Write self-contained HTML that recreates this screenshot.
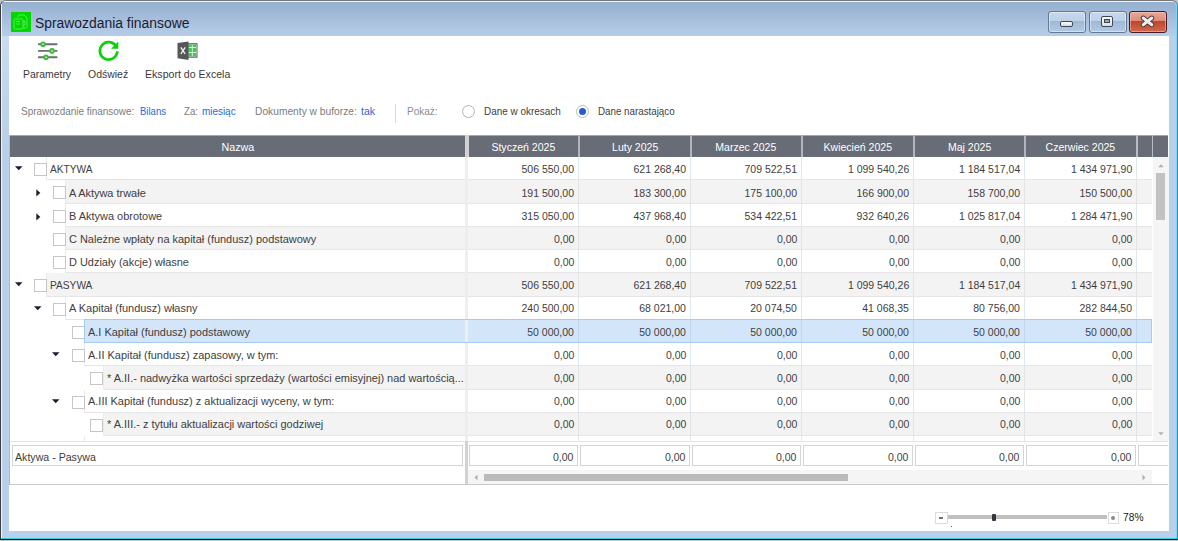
<!DOCTYPE html>
<html><head><meta charset="utf-8"><title>Sprawozdania finansowe</title>
<style>
*{box-sizing:border-box;margin:0;padding:0}
html,body{width:1178px;height:541px;overflow:hidden;background:#c4c4c4;font-family:"Liberation Sans",sans-serif}
.a{position:absolute}
.t{position:absolute;white-space:nowrap;line-height:1}
.cb{position:absolute;width:13px;height:13px;border:1px solid #c6c6c6;background:#fff}
</style></head><body>

<div class="a" style="left:0;top:0;width:1178px;height:540px;background:#b9d0ea;border-left:1px solid #3c3c3c;border-top:1px solid #787878;border-right:1px solid #2599b2;border-bottom:1px solid #0c1418;border-radius:6px 6px 0 0"></div>
<div class="a" style="left:1px;top:1px;width:1175px;height:35px;border-radius:5px 5px 0 0;background:linear-gradient(#eef4fa 0px,#eef4fa 1px,#95b0d0 1px,#9cb5d3 8px,#b6cde8 34px)"></div>
<div class="a" style="left:1176px;top:5px;width:1px;height:533px;background:#86d2ee"></div>
<div class="a" style="left:1px;top:538px;width:1176px;height:1px;background:#30cde6"></div>
<div class="a" style="left:1px;top:4px;width:1px;height:534px;background:#f2f6fa"></div>
<div class="a" style="left:2px;top:36px;width:7px;height:110px;background:linear-gradient(#c9dcf0,#b9d0ea)"></div>
<div class="a" style="left:11px;top:12px;width:20px;height:20px;background:#00d800"></div>
<svg class="a" style="left:11px;top:12px" width="20" height="20" viewBox="0 0 20 20"><g fill="none" stroke="#66ea66" stroke-width="0.9"><path d="M7 5.5 V4.5 Q7 3 8.5 3 H13 L16 6 V14.5 Q16 16 14.5 16 H12"/><rect x="3" y="7" width="9" height="10" rx="1.5"/><path d="M5 9.5 H9 M5 12 H9"/><path d="M12 9 H14 V13 H12"/></g></svg>
<div class="t" style="left:34.60px;top:16px;font-size:14px;color:#1b1b35;transform:scaleX(0.9919);transform-origin:0 0">Sprawozdania finansowe</div>
<div class="a" style="left:1048px;top:11px;width:38px;height:22px;border:1px solid #66788f;border-radius:3px;background:linear-gradient(#c6d8ec 0,#bcd1e9 45%,#9eb8d4 46%,#b2cae4 100%);box-shadow:inset 0 0 0 1px rgba(255,255,255,.45)"></div>
<div class="a" style="left:1060px;top:21px;width:13px;height:6px;border:1px solid #3e4858;border-radius:2px;background:linear-gradient(#fff,#d8d8d8)"></div>
<div class="a" style="left:1089px;top:11px;width:38px;height:22px;border:1px solid #66788f;border-radius:3px;background:linear-gradient(#c6d8ec 0,#bcd1e9 45%,#9eb8d4 46%,#b2cae4 100%);box-shadow:inset 0 0 0 1px rgba(255,255,255,.45)"></div>
<div class="a" style="left:1101px;top:16px;width:12px;height:11px;border:1px solid #3e4858;border-radius:2px;background:linear-gradient(#fff,#dcdcdc)"></div>
<div class="a" style="left:1104px;top:19px;width:6px;height:4px;border:1px solid #3e4858;background:#8aa6c8"></div>
<div class="a" style="left:1129px;top:11px;width:38px;height:22px;border:1px solid #4a1a22;border-radius:3px;background:linear-gradient(#e9a898 0,#dc8a78 45%,#c0442a 46%,#d06a50 100%);box-shadow:inset 0 0 0 1px rgba(255,220,210,.45)"></div>
<svg class="a" style="left:1140px;top:15px" width="15" height="13" viewBox="0 0 15 13"><path d="M3.2 3 L11.8 9.8 M11.8 3 L3.2 9.8" stroke="#4a3434" stroke-width="4.8" fill="none" stroke-linecap="round"/><path d="M3.2 3 L11.8 9.8 M11.8 3 L3.2 9.8" stroke="#ececec" stroke-width="3.0" fill="none" stroke-linecap="round"/></svg>
<div class="a" style="left:9px;top:36px;width:1160px;height:495px;background:#fff"></div>
<svg class="a" style="left:36px;top:39px" width="24" height="22" viewBox="0 0 24 22">
<g stroke="#6c6c72" stroke-width="1.9" stroke-linecap="round"><line x1="2.8" y1="5.2" x2="20.6" y2="5.2"/><line x1="2.8" y1="11.9" x2="20.6" y2="11.9"/><line x1="2.8" y1="18.3" x2="20.6" y2="18.3"/></g>
<g fill="#3cbc3c"><circle cx="7.1" cy="5.2" r="2.8"/><circle cx="16" cy="11.9" r="2.8"/><circle cx="10" cy="18.3" r="2.8"/></g>
<g fill="#c8f0c8"><circle cx="7.1" cy="5.2" r="0.9"/><circle cx="16" cy="11.9" r="0.9"/><circle cx="10" cy="18.3" r="0.9"/></g></svg>
<svg class="a" style="left:96px;top:39px" width="26" height="24" viewBox="0 0 26 24">
<path d="M20.2 7.6 A8.7 8.7 0 1 0 21.3 12.3" fill="none" stroke="#0ad20a" stroke-width="2.7"/>
<path d="M22.3 2.5 L22.3 9.8 L15 9.8 Z" fill="#0ad20a"/></svg>
<svg class="a" style="left:176px;top:40px" width="24" height="22" viewBox="0 0 24 22">
<rect x="12" y="3.2" width="9.5" height="14.5" fill="#5a5c60"/>
<rect x="12.5" y="4.5" width="8" height="12" fill="#fff"/>
<g fill="#3ccc4a"><rect x="12.5" y="4.6" width="3.4" height="2.4"/><rect x="16.6" y="4.6" width="3.6" height="2.4"/><rect x="12.5" y="7.8" width="3.4" height="4.2"/><rect x="16.6" y="7.8" width="3.6" height="4.2"/><rect x="12.5" y="12.9" width="3.4" height="3.4"/><rect x="16.6" y="12.9" width="3.6" height="3.4"/></g>
<path d="M1.5 3 L12.5 1.5 L12.5 20 L1.5 18.3 Z" fill="#55575b"/>
<path d="M4.8 7.3 L9.2 14 M9.2 7.3 L4.8 14" stroke="#f4f4f4" stroke-width="1.35"/></svg>
<div class="t" style="left:22.90px;top:69px;font-size:11px;color:#3a3a3a;transform:scaleX(0.9478);transform-origin:0 0">Parametry</div>
<div class="t" style="left:88.30px;top:69px;font-size:11px;color:#3a3a3a;transform:scaleX(0.9529);transform-origin:0 0">Odświeź</div>
<div class="t" style="left:144.70px;top:69px;font-size:11px;color:#3a3a3a;transform:scaleX(0.9621);transform-origin:0 0">Eksport do Excela</div>
<div class="t" style="left:21.10px;top:106px;font-size:11px;color:#7c7c7c;transform:scaleX(0.9030);transform-origin:0 0">Sprawozdanie finansowe:</div>
<div class="t" style="left:139.60px;top:106px;font-size:11px;color:#2a68d6;transform:scaleX(0.8676);transform-origin:0 0">Bilans</div>
<div class="t" style="left:183.70px;top:106px;font-size:11px;color:#7c7c7c;transform:scaleX(0.8802);transform-origin:0 0">Za:</div>
<div class="t" style="left:202.40px;top:106px;font-size:11px;color:#2a68d6;transform:scaleX(0.9009);transform-origin:0 0">miesiąc</div>
<div class="t" style="left:254.70px;top:106px;font-size:11px;color:#7c7c7c;transform:scaleX(0.9302);transform-origin:0 0">Dokumenty w buforze:</div>
<div class="t" style="left:361.00px;top:106px;font-size:11px;color:#2a68d6;transform:scaleX(0.9532);transform-origin:0 0">tak</div>
<div class="t" style="left:407.20px;top:106px;font-size:11px;color:#8c8c8c;transform:scaleX(0.9096);transform-origin:0 0">Pokaż:</div>
<div class="t" style="left:484.20px;top:106px;font-size:11px;color:#3e3e3e;transform:scaleX(0.9035);transform-origin:0 0">Dane w okresach</div>
<div class="t" style="left:598.40px;top:106px;font-size:11px;color:#3e3e3e;transform:scaleX(0.8883);transform-origin:0 0">Dane narastająco</div>
<div class="a" style="left:395px;top:104px;width:1px;height:19px;background:#e6d2ca"></div>
<div class="a" style="left:462px;top:104.5px;width:13px;height:13px;border-radius:50%;border:1px solid #b4b4b4;background:#fff"></div>
<div class="a" style="left:575.5px;top:104.5px;width:13px;height:13px;border-radius:50%;border:1px solid #bcbcbc;background:#fff"></div>
<div class="a" style="left:578.5px;top:107.5px;width:7px;height:7px;border-radius:50%;background:#2a5cd0"></div>
<div class="a" style="left:10px;top:135px;width:1158px;height:22px;background:#676c77"></div>
<div class="a" style="left:10px;top:135px;width:1158px;height:1px;background:#a4a7ae"></div>
<div class="a" style="left:465px;top:135px;width:4px;height:22px;background:#d2d2d4"></div>
<div class="a" style="left:578px;top:135px;width:2px;height:22px;background:#b2b5bc"></div>
<div class="a" style="left:690px;top:135px;width:2px;height:22px;background:#b2b5bc"></div>
<div class="a" style="left:801px;top:135px;width:2px;height:22px;background:#b2b5bc"></div>
<div class="a" style="left:913px;top:135px;width:2px;height:22px;background:#b2b5bc"></div>
<div class="a" style="left:1024px;top:135px;width:2px;height:22px;background:#b2b5bc"></div>
<div class="a" style="left:1136px;top:135px;width:1.5px;height:22px;background:#b8bbc2"></div>
<div class="a" style="left:1151.5px;top:135px;width:1.5px;height:22px;background:#b8bbc2"></div>
<div class="t" style="left:220.59px;top:142px;font-size:11px;color:#fff;transform:scaleX(0.9725);transform-origin:50% 0">Nazwa</div>
<div class="t" style="left:489.87px;top:142px;font-size:11px;color:#fff;transform:scaleX(0.9580);transform-origin:50% 0">Styczeń 2025</div>
<div class="t" style="left:610.54px;top:142px;font-size:11px;color:#fff;transform:scaleX(0.9580);transform-origin:50% 0">Luty 2025</div>
<div class="t" style="left:714.40px;top:142px;font-size:11px;color:#fff;transform:scaleX(0.9580);transform-origin:50% 0">Marzec 2025</div>
<div class="t" style="left:821.92px;top:142px;font-size:11px;color:#fff;transform:scaleX(0.9580);transform-origin:50% 0">Kwiecień 2025</div>
<div class="t" style="left:946.57px;top:142px;font-size:11px;color:#fff;transform:scaleX(0.9580);transform-origin:50% 0">Maj 2025</div>
<div class="t" style="left:1044.32px;top:142px;font-size:11px;color:#fff;transform:scaleX(0.9580);transform-origin:50% 0">Czerwiec 2025</div>
<div class="a" style="left:46px;top:157px;width:1106px;height:22px;background:#ffffff"></div>
<div class="a" style="left:46px;top:179px;width:1106px;height:1px;background:#e6e6e6"></div>
<div class="a" style="left:46px;top:157px;width:1px;height:23px;background:#ebebeb"></div>
<div class="a" style="left:465px;top:157px;width:3px;height:23px;background:#eeeeee"></div>
<div class="a" style="left:578px;top:157px;width:1px;height:22px;background:#dfe7f0"></div>
<div class="a" style="left:690px;top:157px;width:1px;height:22px;background:#dfe7f0"></div>
<div class="a" style="left:801px;top:157px;width:1px;height:22px;background:#dfe7f0"></div>
<div class="a" style="left:913px;top:157px;width:1px;height:22px;background:#dfe7f0"></div>
<div class="a" style="left:1024px;top:157px;width:1px;height:22px;background:#dfe7f0"></div>
<div class="a" style="left:1136px;top:157px;width:1px;height:22px;background:#dfe7f0"></div>
<svg class="a" style="left:15px;top:166px" width="8" height="5" viewBox="0 0 8 5"><path d="M0 0.3 H7.5 L3.75 4.3 Z" fill="#1c1c30"/></svg>
<div class="cb" style="left:34px;top:163px"></div>
<div class="t" style="left:50.10px;top:164px;font-size:11px;color:#3e3e3e;transform:scaleX(0.9250);transform-origin:0 0">AKTYWA</div>
<div class="t" style="left:519.34px;top:164px;font-size:11px;color:#3e3e3e;transform:scaleX(0.9550);transform-origin:100% 0">506 550,00</div>
<div class="t" style="left:631.34px;top:164px;font-size:11px;color:#3e3e3e;transform:scaleX(0.9550);transform-origin:100% 0">621 268,40</div>
<div class="t" style="left:742.34px;top:164px;font-size:11px;color:#3e3e3e;transform:scaleX(0.9550);transform-origin:100% 0">709 522,51</div>
<div class="t" style="left:845.17px;top:164px;font-size:11px;color:#3e3e3e;transform:scaleX(0.9550);transform-origin:100% 0">1 099 540,26</div>
<div class="t" style="left:956.17px;top:164px;font-size:11px;color:#3e3e3e;transform:scaleX(0.9550);transform-origin:100% 0">1 184 517,04</div>
<div class="t" style="left:1068.17px;top:164px;font-size:11px;color:#3e3e3e;transform:scaleX(0.9550);transform-origin:100% 0">1 434 971,90</div>
<div class="a" style="left:65px;top:180px;width:1087px;height:23px;background:#f3f3f3"></div>
<div class="a" style="left:65px;top:203px;width:1087px;height:1px;background:#e6e6e6"></div>
<div class="a" style="left:65px;top:180px;width:1px;height:24px;background:#ebebeb"></div>
<div class="a" style="left:465px;top:180px;width:3px;height:24px;background:#eeeeee"></div>
<div class="a" style="left:578px;top:180px;width:1px;height:23px;background:#e4e4e4"></div>
<div class="a" style="left:690px;top:180px;width:1px;height:23px;background:#e4e4e4"></div>
<div class="a" style="left:801px;top:180px;width:1px;height:23px;background:#e4e4e4"></div>
<div class="a" style="left:913px;top:180px;width:1px;height:23px;background:#e4e4e4"></div>
<div class="a" style="left:1024px;top:180px;width:1px;height:23px;background:#e4e4e4"></div>
<div class="a" style="left:1136px;top:180px;width:1px;height:23px;background:#e4e4e4"></div>
<svg class="a" style="left:36px;top:189px" width="5" height="8" viewBox="0 0 5 8"><path d="M0.3 0.3 V7.5 L4.3 3.9 Z" fill="#1c1c30"/></svg>
<div class="cb" style="left:53px;top:186px"></div>
<div class="t" style="left:69.10px;top:188px;font-size:11px;color:#3e3e3e;transform:scaleX(0.9960);transform-origin:0 0">A Aktywa trwałe</div>
<div class="t" style="left:519.34px;top:188px;font-size:11px;color:#3e3e3e;transform:scaleX(0.9550);transform-origin:100% 0">191 500,00</div>
<div class="t" style="left:631.34px;top:188px;font-size:11px;color:#3e3e3e;transform:scaleX(0.9550);transform-origin:100% 0">183 300,00</div>
<div class="t" style="left:742.34px;top:188px;font-size:11px;color:#3e3e3e;transform:scaleX(0.9550);transform-origin:100% 0">175 100,00</div>
<div class="t" style="left:854.34px;top:188px;font-size:11px;color:#3e3e3e;transform:scaleX(0.9550);transform-origin:100% 0">166 900,00</div>
<div class="t" style="left:965.34px;top:188px;font-size:11px;color:#3e3e3e;transform:scaleX(0.9550);transform-origin:100% 0">158 700,00</div>
<div class="t" style="left:1077.34px;top:188px;font-size:11px;color:#3e3e3e;transform:scaleX(0.9550);transform-origin:100% 0">150 500,00</div>
<div class="a" style="left:65px;top:204px;width:1087px;height:22px;background:#ffffff"></div>
<div class="a" style="left:65px;top:226px;width:1087px;height:1px;background:#e6e6e6"></div>
<div class="a" style="left:65px;top:204px;width:1px;height:23px;background:#ebebeb"></div>
<div class="a" style="left:465px;top:204px;width:3px;height:23px;background:#eeeeee"></div>
<div class="a" style="left:578px;top:204px;width:1px;height:22px;background:#dfe7f0"></div>
<div class="a" style="left:690px;top:204px;width:1px;height:22px;background:#dfe7f0"></div>
<div class="a" style="left:801px;top:204px;width:1px;height:22px;background:#dfe7f0"></div>
<div class="a" style="left:913px;top:204px;width:1px;height:22px;background:#dfe7f0"></div>
<div class="a" style="left:1024px;top:204px;width:1px;height:22px;background:#dfe7f0"></div>
<div class="a" style="left:1136px;top:204px;width:1px;height:22px;background:#dfe7f0"></div>
<svg class="a" style="left:36px;top:213px" width="5" height="8" viewBox="0 0 5 8"><path d="M0.3 0.3 V7.5 L4.3 3.9 Z" fill="#1c1c30"/></svg>
<div class="cb" style="left:53px;top:210px"></div>
<div class="t" style="left:69.10px;top:211px;font-size:11px;color:#3e3e3e;transform:scaleX(0.9960);transform-origin:0 0">B Aktywa obrotowe</div>
<div class="t" style="left:519.34px;top:211px;font-size:11px;color:#3e3e3e;transform:scaleX(0.9550);transform-origin:100% 0">315 050,00</div>
<div class="t" style="left:631.34px;top:211px;font-size:11px;color:#3e3e3e;transform:scaleX(0.9550);transform-origin:100% 0">437 968,40</div>
<div class="t" style="left:742.34px;top:211px;font-size:11px;color:#3e3e3e;transform:scaleX(0.9550);transform-origin:100% 0">534 422,51</div>
<div class="t" style="left:854.34px;top:211px;font-size:11px;color:#3e3e3e;transform:scaleX(0.9550);transform-origin:100% 0">932 640,26</div>
<div class="t" style="left:956.17px;top:211px;font-size:11px;color:#3e3e3e;transform:scaleX(0.9550);transform-origin:100% 0">1 025 817,04</div>
<div class="t" style="left:1068.17px;top:211px;font-size:11px;color:#3e3e3e;transform:scaleX(0.9550);transform-origin:100% 0">1 284 471,90</div>
<div class="a" style="left:65px;top:227px;width:1087px;height:22px;background:#f3f3f3"></div>
<div class="a" style="left:65px;top:249px;width:1087px;height:1px;background:#e6e6e6"></div>
<div class="a" style="left:65px;top:227px;width:1px;height:23px;background:#ebebeb"></div>
<div class="a" style="left:465px;top:227px;width:3px;height:23px;background:#eeeeee"></div>
<div class="a" style="left:578px;top:227px;width:1px;height:22px;background:#e4e4e4"></div>
<div class="a" style="left:690px;top:227px;width:1px;height:22px;background:#e4e4e4"></div>
<div class="a" style="left:801px;top:227px;width:1px;height:22px;background:#e4e4e4"></div>
<div class="a" style="left:913px;top:227px;width:1px;height:22px;background:#e4e4e4"></div>
<div class="a" style="left:1024px;top:227px;width:1px;height:22px;background:#e4e4e4"></div>
<div class="a" style="left:1136px;top:227px;width:1px;height:22px;background:#e4e4e4"></div>
<div class="cb" style="left:53px;top:233px"></div>
<div class="t" style="left:69.10px;top:234px;font-size:11px;color:#3e3e3e;transform:scaleX(0.9960);transform-origin:0 0">C Należne wpłaty na kapitał (fundusz) podstawowy</div>
<div class="t" style="left:552.98px;top:234px;font-size:11px;color:#3e3e3e;transform:scaleX(0.9550);transform-origin:100% 0">0,00</div>
<div class="t" style="left:664.98px;top:234px;font-size:11px;color:#3e3e3e;transform:scaleX(0.9550);transform-origin:100% 0">0,00</div>
<div class="t" style="left:775.98px;top:234px;font-size:11px;color:#3e3e3e;transform:scaleX(0.9550);transform-origin:100% 0">0,00</div>
<div class="t" style="left:887.98px;top:234px;font-size:11px;color:#3e3e3e;transform:scaleX(0.9550);transform-origin:100% 0">0,00</div>
<div class="t" style="left:998.98px;top:234px;font-size:11px;color:#3e3e3e;transform:scaleX(0.9550);transform-origin:100% 0">0,00</div>
<div class="t" style="left:1110.98px;top:234px;font-size:11px;color:#3e3e3e;transform:scaleX(0.9550);transform-origin:100% 0">0,00</div>
<div class="a" style="left:65px;top:250px;width:1087px;height:22px;background:#ffffff"></div>
<div class="a" style="left:65px;top:272px;width:1087px;height:1px;background:#e6e6e6"></div>
<div class="a" style="left:65px;top:250px;width:1px;height:23px;background:#ebebeb"></div>
<div class="a" style="left:465px;top:250px;width:3px;height:23px;background:#eeeeee"></div>
<div class="a" style="left:578px;top:250px;width:1px;height:22px;background:#dfe7f0"></div>
<div class="a" style="left:690px;top:250px;width:1px;height:22px;background:#dfe7f0"></div>
<div class="a" style="left:801px;top:250px;width:1px;height:22px;background:#dfe7f0"></div>
<div class="a" style="left:913px;top:250px;width:1px;height:22px;background:#dfe7f0"></div>
<div class="a" style="left:1024px;top:250px;width:1px;height:22px;background:#dfe7f0"></div>
<div class="a" style="left:1136px;top:250px;width:1px;height:22px;background:#dfe7f0"></div>
<div class="cb" style="left:53px;top:256px"></div>
<div class="t" style="left:69.10px;top:257px;font-size:11px;color:#3e3e3e;transform:scaleX(0.9960);transform-origin:0 0">D Udziały (akcje) własne</div>
<div class="t" style="left:552.98px;top:257px;font-size:11px;color:#3e3e3e;transform:scaleX(0.9550);transform-origin:100% 0">0,00</div>
<div class="t" style="left:664.98px;top:257px;font-size:11px;color:#3e3e3e;transform:scaleX(0.9550);transform-origin:100% 0">0,00</div>
<div class="t" style="left:775.98px;top:257px;font-size:11px;color:#3e3e3e;transform:scaleX(0.9550);transform-origin:100% 0">0,00</div>
<div class="t" style="left:887.98px;top:257px;font-size:11px;color:#3e3e3e;transform:scaleX(0.9550);transform-origin:100% 0">0,00</div>
<div class="t" style="left:998.98px;top:257px;font-size:11px;color:#3e3e3e;transform:scaleX(0.9550);transform-origin:100% 0">0,00</div>
<div class="t" style="left:1110.98px;top:257px;font-size:11px;color:#3e3e3e;transform:scaleX(0.9550);transform-origin:100% 0">0,00</div>
<div class="a" style="left:46px;top:273px;width:1106px;height:23px;background:#f3f3f3"></div>
<div class="a" style="left:46px;top:296px;width:1106px;height:1px;background:#e6e6e6"></div>
<div class="a" style="left:46px;top:273px;width:1px;height:24px;background:#ebebeb"></div>
<div class="a" style="left:465px;top:273px;width:3px;height:24px;background:#eeeeee"></div>
<div class="a" style="left:578px;top:273px;width:1px;height:23px;background:#e4e4e4"></div>
<div class="a" style="left:690px;top:273px;width:1px;height:23px;background:#e4e4e4"></div>
<div class="a" style="left:801px;top:273px;width:1px;height:23px;background:#e4e4e4"></div>
<div class="a" style="left:913px;top:273px;width:1px;height:23px;background:#e4e4e4"></div>
<div class="a" style="left:1024px;top:273px;width:1px;height:23px;background:#e4e4e4"></div>
<div class="a" style="left:1136px;top:273px;width:1px;height:23px;background:#e4e4e4"></div>
<svg class="a" style="left:15px;top:282px" width="8" height="5" viewBox="0 0 8 5"><path d="M0 0.3 H7.5 L3.75 4.3 Z" fill="#1c1c30"/></svg>
<div class="cb" style="left:34px;top:279px"></div>
<div class="t" style="left:50.10px;top:280px;font-size:11px;color:#3e3e3e;transform:scaleX(0.9250);transform-origin:0 0">PASYWA</div>
<div class="t" style="left:519.34px;top:280px;font-size:11px;color:#3e3e3e;transform:scaleX(0.9550);transform-origin:100% 0">506 550,00</div>
<div class="t" style="left:631.34px;top:280px;font-size:11px;color:#3e3e3e;transform:scaleX(0.9550);transform-origin:100% 0">621 268,40</div>
<div class="t" style="left:742.34px;top:280px;font-size:11px;color:#3e3e3e;transform:scaleX(0.9550);transform-origin:100% 0">709 522,51</div>
<div class="t" style="left:845.17px;top:280px;font-size:11px;color:#3e3e3e;transform:scaleX(0.9550);transform-origin:100% 0">1 099 540,26</div>
<div class="t" style="left:956.17px;top:280px;font-size:11px;color:#3e3e3e;transform:scaleX(0.9550);transform-origin:100% 0">1 184 517,04</div>
<div class="t" style="left:1068.17px;top:280px;font-size:11px;color:#3e3e3e;transform:scaleX(0.9550);transform-origin:100% 0">1 434 971,90</div>
<div class="a" style="left:65px;top:297px;width:1087px;height:22px;background:#ffffff"></div>
<div class="a" style="left:65px;top:319px;width:1087px;height:1px;background:#e6e6e6"></div>
<div class="a" style="left:65px;top:297px;width:1px;height:23px;background:#ebebeb"></div>
<div class="a" style="left:465px;top:297px;width:3px;height:23px;background:#eeeeee"></div>
<div class="a" style="left:578px;top:297px;width:1px;height:22px;background:#dfe7f0"></div>
<div class="a" style="left:690px;top:297px;width:1px;height:22px;background:#dfe7f0"></div>
<div class="a" style="left:801px;top:297px;width:1px;height:22px;background:#dfe7f0"></div>
<div class="a" style="left:913px;top:297px;width:1px;height:22px;background:#dfe7f0"></div>
<div class="a" style="left:1024px;top:297px;width:1px;height:22px;background:#dfe7f0"></div>
<div class="a" style="left:1136px;top:297px;width:1px;height:22px;background:#dfe7f0"></div>
<svg class="a" style="left:34px;top:306px" width="8" height="5" viewBox="0 0 8 5"><path d="M0 0.3 H7.5 L3.75 4.3 Z" fill="#1c1c30"/></svg>
<div class="cb" style="left:53px;top:303px"></div>
<div class="t" style="left:69.10px;top:303px;font-size:11px;color:#3e3e3e;transform:scaleX(0.9960);transform-origin:0 0">A Kapitał (fundusz) własny</div>
<div class="t" style="left:519.34px;top:303px;font-size:11px;color:#3e3e3e;transform:scaleX(0.9550);transform-origin:100% 0">240 500,00</div>
<div class="t" style="left:637.46px;top:303px;font-size:11px;color:#3e3e3e;transform:scaleX(0.9550);transform-origin:100% 0">68 021,00</div>
<div class="t" style="left:748.46px;top:303px;font-size:11px;color:#3e3e3e;transform:scaleX(0.9550);transform-origin:100% 0">20 074,50</div>
<div class="t" style="left:860.46px;top:303px;font-size:11px;color:#3e3e3e;transform:scaleX(0.9550);transform-origin:100% 0">41 068,35</div>
<div class="t" style="left:971.46px;top:303px;font-size:11px;color:#3e3e3e;transform:scaleX(0.9550);transform-origin:100% 0">80 756,00</div>
<div class="t" style="left:1077.34px;top:303px;font-size:11px;color:#3e3e3e;transform:scaleX(0.9550);transform-origin:100% 0">282 844,50</div>
<div class="a" style="left:84px;top:320px;width:1068px;height:22px;background:#d3e5f9"></div>
<div class="a" style="left:84px;top:342px;width:1068px;height:1px;background:#e6e6e6"></div>
<div class="a" style="left:84px;top:320px;width:1px;height:23px;background:#ebebeb"></div>
<div class="a" style="left:465px;top:320px;width:3px;height:23px;background:#eeeeee"></div>
<div class="a" style="left:578px;top:320px;width:1px;height:22px;background:#c4d6ea"></div>
<div class="a" style="left:690px;top:320px;width:1px;height:22px;background:#c4d6ea"></div>
<div class="a" style="left:801px;top:320px;width:1px;height:22px;background:#c4d6ea"></div>
<div class="a" style="left:913px;top:320px;width:1px;height:22px;background:#c4d6ea"></div>
<div class="a" style="left:1024px;top:320px;width:1px;height:22px;background:#c4d6ea"></div>
<div class="a" style="left:1136px;top:320px;width:1px;height:22px;background:#c4d6ea"></div>
<div class="cb" style="left:72px;top:326px"></div>
<div class="t" style="left:88.10px;top:327px;font-size:11px;color:#3e3e3e;transform:scaleX(0.9960);transform-origin:0 0">A.I Kapitał (fundusz) podstawowy</div>
<div class="t" style="left:525.46px;top:327px;font-size:11px;color:#3e3e3e;transform:scaleX(0.9550);transform-origin:100% 0">50 000,00</div>
<div class="t" style="left:637.46px;top:327px;font-size:11px;color:#3e3e3e;transform:scaleX(0.9550);transform-origin:100% 0">50 000,00</div>
<div class="t" style="left:748.46px;top:327px;font-size:11px;color:#3e3e3e;transform:scaleX(0.9550);transform-origin:100% 0">50 000,00</div>
<div class="t" style="left:860.46px;top:327px;font-size:11px;color:#3e3e3e;transform:scaleX(0.9550);transform-origin:100% 0">50 000,00</div>
<div class="t" style="left:971.46px;top:327px;font-size:11px;color:#3e3e3e;transform:scaleX(0.9550);transform-origin:100% 0">50 000,00</div>
<div class="t" style="left:1083.46px;top:327px;font-size:11px;color:#3e3e3e;transform:scaleX(0.9550);transform-origin:100% 0">50 000,00</div>
<div class="a" style="left:84px;top:343px;width:1068px;height:22px;background:#ffffff"></div>
<div class="a" style="left:84px;top:365px;width:1068px;height:1px;background:#e6e6e6"></div>
<div class="a" style="left:84px;top:343px;width:1px;height:23px;background:#ebebeb"></div>
<div class="a" style="left:465px;top:343px;width:3px;height:23px;background:#eeeeee"></div>
<div class="a" style="left:578px;top:343px;width:1px;height:22px;background:#dfe7f0"></div>
<div class="a" style="left:690px;top:343px;width:1px;height:22px;background:#dfe7f0"></div>
<div class="a" style="left:801px;top:343px;width:1px;height:22px;background:#dfe7f0"></div>
<div class="a" style="left:913px;top:343px;width:1px;height:22px;background:#dfe7f0"></div>
<div class="a" style="left:1024px;top:343px;width:1px;height:22px;background:#dfe7f0"></div>
<div class="a" style="left:1136px;top:343px;width:1px;height:22px;background:#dfe7f0"></div>
<svg class="a" style="left:52px;top:352px" width="8" height="5" viewBox="0 0 8 5"><path d="M0 0.3 H7.5 L3.75 4.3 Z" fill="#1c1c30"/></svg>
<div class="cb" style="left:72px;top:349px"></div>
<div class="t" style="left:88.10px;top:350px;font-size:11px;color:#3e3e3e;transform:scaleX(0.9960);transform-origin:0 0">A.II Kapitał (fundusz) zapasowy, w tym:</div>
<div class="t" style="left:552.98px;top:350px;font-size:11px;color:#3e3e3e;transform:scaleX(0.9550);transform-origin:100% 0">0,00</div>
<div class="t" style="left:664.98px;top:350px;font-size:11px;color:#3e3e3e;transform:scaleX(0.9550);transform-origin:100% 0">0,00</div>
<div class="t" style="left:775.98px;top:350px;font-size:11px;color:#3e3e3e;transform:scaleX(0.9550);transform-origin:100% 0">0,00</div>
<div class="t" style="left:887.98px;top:350px;font-size:11px;color:#3e3e3e;transform:scaleX(0.9550);transform-origin:100% 0">0,00</div>
<div class="t" style="left:998.98px;top:350px;font-size:11px;color:#3e3e3e;transform:scaleX(0.9550);transform-origin:100% 0">0,00</div>
<div class="t" style="left:1110.98px;top:350px;font-size:11px;color:#3e3e3e;transform:scaleX(0.9550);transform-origin:100% 0">0,00</div>
<div class="a" style="left:103px;top:366px;width:1049px;height:23px;background:#f3f3f3"></div>
<div class="a" style="left:103px;top:389px;width:1049px;height:1px;background:#e6e6e6"></div>
<div class="a" style="left:103px;top:366px;width:1px;height:24px;background:#ebebeb"></div>
<div class="a" style="left:465px;top:366px;width:3px;height:24px;background:#eeeeee"></div>
<div class="a" style="left:578px;top:366px;width:1px;height:23px;background:#e4e4e4"></div>
<div class="a" style="left:690px;top:366px;width:1px;height:23px;background:#e4e4e4"></div>
<div class="a" style="left:801px;top:366px;width:1px;height:23px;background:#e4e4e4"></div>
<div class="a" style="left:913px;top:366px;width:1px;height:23px;background:#e4e4e4"></div>
<div class="a" style="left:1024px;top:366px;width:1px;height:23px;background:#e4e4e4"></div>
<div class="a" style="left:1136px;top:366px;width:1px;height:23px;background:#e4e4e4"></div>
<div class="cb" style="left:90px;top:372px"></div>
<div class="t" style="left:107.10px;top:373px;font-size:11px;color:#3e3e3e;transform:scaleX(0.9960);transform-origin:0 0">* A.II.- nadwyżka wartości sprzedaży (wartości emisyjnej) nad wartością...</div>
<div class="t" style="left:552.98px;top:373px;font-size:11px;color:#3e3e3e;transform:scaleX(0.9550);transform-origin:100% 0">0,00</div>
<div class="t" style="left:664.98px;top:373px;font-size:11px;color:#3e3e3e;transform:scaleX(0.9550);transform-origin:100% 0">0,00</div>
<div class="t" style="left:775.98px;top:373px;font-size:11px;color:#3e3e3e;transform:scaleX(0.9550);transform-origin:100% 0">0,00</div>
<div class="t" style="left:887.98px;top:373px;font-size:11px;color:#3e3e3e;transform:scaleX(0.9550);transform-origin:100% 0">0,00</div>
<div class="t" style="left:998.98px;top:373px;font-size:11px;color:#3e3e3e;transform:scaleX(0.9550);transform-origin:100% 0">0,00</div>
<div class="t" style="left:1110.98px;top:373px;font-size:11px;color:#3e3e3e;transform:scaleX(0.9550);transform-origin:100% 0">0,00</div>
<div class="a" style="left:84px;top:390px;width:1068px;height:22px;background:#ffffff"></div>
<div class="a" style="left:84px;top:412px;width:1068px;height:1px;background:#e6e6e6"></div>
<div class="a" style="left:84px;top:390px;width:1px;height:23px;background:#ebebeb"></div>
<div class="a" style="left:465px;top:390px;width:3px;height:23px;background:#eeeeee"></div>
<div class="a" style="left:578px;top:390px;width:1px;height:22px;background:#dfe7f0"></div>
<div class="a" style="left:690px;top:390px;width:1px;height:22px;background:#dfe7f0"></div>
<div class="a" style="left:801px;top:390px;width:1px;height:22px;background:#dfe7f0"></div>
<div class="a" style="left:913px;top:390px;width:1px;height:22px;background:#dfe7f0"></div>
<div class="a" style="left:1024px;top:390px;width:1px;height:22px;background:#dfe7f0"></div>
<div class="a" style="left:1136px;top:390px;width:1px;height:22px;background:#dfe7f0"></div>
<svg class="a" style="left:52px;top:399px" width="8" height="5" viewBox="0 0 8 5"><path d="M0 0.3 H7.5 L3.75 4.3 Z" fill="#1c1c30"/></svg>
<div class="cb" style="left:72px;top:396px"></div>
<div class="t" style="left:88.10px;top:396px;font-size:11px;color:#3e3e3e;transform:scaleX(0.9960);transform-origin:0 0">A.III Kapitał (fundusz) z aktualizacji wyceny, w tym:</div>
<div class="t" style="left:552.98px;top:396px;font-size:11px;color:#3e3e3e;transform:scaleX(0.9550);transform-origin:100% 0">0,00</div>
<div class="t" style="left:664.98px;top:396px;font-size:11px;color:#3e3e3e;transform:scaleX(0.9550);transform-origin:100% 0">0,00</div>
<div class="t" style="left:775.98px;top:396px;font-size:11px;color:#3e3e3e;transform:scaleX(0.9550);transform-origin:100% 0">0,00</div>
<div class="t" style="left:887.98px;top:396px;font-size:11px;color:#3e3e3e;transform:scaleX(0.9550);transform-origin:100% 0">0,00</div>
<div class="t" style="left:998.98px;top:396px;font-size:11px;color:#3e3e3e;transform:scaleX(0.9550);transform-origin:100% 0">0,00</div>
<div class="t" style="left:1110.98px;top:396px;font-size:11px;color:#3e3e3e;transform:scaleX(0.9550);transform-origin:100% 0">0,00</div>
<div class="a" style="left:103px;top:413px;width:1049px;height:22px;background:#f3f3f3"></div>
<div class="a" style="left:103px;top:435px;width:1049px;height:1px;background:#e6e6e6"></div>
<div class="a" style="left:103px;top:413px;width:1px;height:23px;background:#ebebeb"></div>
<div class="a" style="left:465px;top:413px;width:3px;height:23px;background:#eeeeee"></div>
<div class="a" style="left:578px;top:413px;width:1px;height:22px;background:#e4e4e4"></div>
<div class="a" style="left:690px;top:413px;width:1px;height:22px;background:#e4e4e4"></div>
<div class="a" style="left:801px;top:413px;width:1px;height:22px;background:#e4e4e4"></div>
<div class="a" style="left:913px;top:413px;width:1px;height:22px;background:#e4e4e4"></div>
<div class="a" style="left:1024px;top:413px;width:1px;height:22px;background:#e4e4e4"></div>
<div class="a" style="left:1136px;top:413px;width:1px;height:22px;background:#e4e4e4"></div>
<div class="cb" style="left:90px;top:419px"></div>
<div class="t" style="left:107.10px;top:419px;font-size:11px;color:#3e3e3e;transform:scaleX(0.9960);transform-origin:0 0">* A.III.- z tytułu aktualizacji wartości godziwej</div>
<div class="t" style="left:552.98px;top:419px;font-size:11px;color:#3e3e3e;transform:scaleX(0.9550);transform-origin:100% 0">0,00</div>
<div class="t" style="left:664.98px;top:419px;font-size:11px;color:#3e3e3e;transform:scaleX(0.9550);transform-origin:100% 0">0,00</div>
<div class="t" style="left:775.98px;top:419px;font-size:11px;color:#3e3e3e;transform:scaleX(0.9550);transform-origin:100% 0">0,00</div>
<div class="t" style="left:887.98px;top:419px;font-size:11px;color:#3e3e3e;transform:scaleX(0.9550);transform-origin:100% 0">0,00</div>
<div class="t" style="left:998.98px;top:419px;font-size:11px;color:#3e3e3e;transform:scaleX(0.9550);transform-origin:100% 0">0,00</div>
<div class="t" style="left:1110.98px;top:419px;font-size:11px;color:#3e3e3e;transform:scaleX(0.9550);transform-origin:100% 0">0,00</div>
<div class="a" style="left:84px;top:436px;width:1px;height:6px;background:#ebebeb"></div>
<div class="a" style="left:465px;top:436px;width:3px;height:6px;background:#eeeeee"></div>
<div class="a" style="left:578px;top:436px;width:1px;height:5px;background:#dfe7f0"></div>
<div class="a" style="left:690px;top:436px;width:1px;height:5px;background:#dfe7f0"></div>
<div class="a" style="left:801px;top:436px;width:1px;height:5px;background:#dfe7f0"></div>
<div class="a" style="left:913px;top:436px;width:1px;height:5px;background:#dfe7f0"></div>
<div class="a" style="left:1024px;top:436px;width:1px;height:5px;background:#dfe7f0"></div>
<div class="a" style="left:1136px;top:436px;width:1px;height:5px;background:#dfe7f0"></div>
<div class="a" style="left:84px;top:319px;width:1068px;height:24px;border:1px solid #a4ccf2"></div>
<div class="a" style="left:1153px;top:157px;width:16px;height:284px;background:#f5f5f5"></div>
<svg class="a" style="left:1157.5px;top:164px" width="6" height="3.5" viewBox="0 0 6 3.5"><path d="M0.2 3.3 L3 0.3 L5.8 3.3Z" fill="#b0b0b0"/></svg>
<svg class="a" style="left:1157.5px;top:432px" width="6" height="3.5" viewBox="0 0 6 3.5"><path d="M0.2 0.2 L3 3.2 L5.8 0.2Z" fill="#b0b0b0"/></svg>
<div class="a" style="left:1156px;top:173px;width:9px;height:47px;background:#c2c2c2"></div>
<div class="a" style="left:10px;top:441px;width:1158px;height:1px;background:#e4e4e4"></div>
<div class="a" style="left:12px;top:445px;width:451px;height:21px;border:1px solid #d4d4d4;background:#fff"></div>
<div class="t" style="left:14.90px;top:452px;font-size:11px;color:#3e3e3e;transform:scaleX(0.9648);transform-origin:0 0">Aktywa - Pasywa</div>
<div class="a" style="left:465px;top:441px;width:3px;height:43px;background:#d2d2d2"></div>
<div class="a" style="left:469px;top:445px;width:109px;height:21px;border:1px solid #d4d4d4;background:#fff"></div>
<div class="t" style="left:552.08px;top:452px;font-size:11px;color:#3e3e3e;transform:scaleX(0.9550);transform-origin:100% 0">0,00</div>
<div class="a" style="left:580px;top:445px;width:110px;height:21px;border:1px solid #d4d4d4;background:#fff"></div>
<div class="t" style="left:664.08px;top:452px;font-size:11px;color:#3e3e3e;transform:scaleX(0.9550);transform-origin:100% 0">0,00</div>
<div class="a" style="left:692px;top:445px;width:109px;height:21px;border:1px solid #d4d4d4;background:#fff"></div>
<div class="t" style="left:775.08px;top:452px;font-size:11px;color:#3e3e3e;transform:scaleX(0.9550);transform-origin:100% 0">0,00</div>
<div class="a" style="left:803px;top:445px;width:110px;height:21px;border:1px solid #d4d4d4;background:#fff"></div>
<div class="t" style="left:887.08px;top:452px;font-size:11px;color:#3e3e3e;transform:scaleX(0.9550);transform-origin:100% 0">0,00</div>
<div class="a" style="left:915px;top:445px;width:109px;height:21px;border:1px solid #d4d4d4;background:#fff"></div>
<div class="t" style="left:998.08px;top:452px;font-size:11px;color:#3e3e3e;transform:scaleX(0.9550);transform-origin:100% 0">0,00</div>
<div class="a" style="left:1026px;top:445px;width:110px;height:21px;border:1px solid #d4d4d4;background:#fff"></div>
<div class="t" style="left:1110.08px;top:452px;font-size:11px;color:#3e3e3e;transform:scaleX(0.9550);transform-origin:100% 0">0,00</div>
<div class="a" style="left:1138px;top:445px;width:30px;height:21px;border:1px solid #d4d4d4;border-right:none;background:#fff"></div>
<div class="a" style="left:468px;top:470px;width:684px;height:14px;background:#f5f5f5"></div>
<svg class="a" style="left:474px;top:474px" width="4" height="7" viewBox="0 0 4 7"><path d="M3.5 0.5 L0.5 3.5 L3.5 6.5Z" fill="#b0b0b0"/></svg>
<svg class="a" style="left:1142px;top:474px" width="4" height="7" viewBox="0 0 4 7"><path d="M0.5 0.5 L3.5 3.5 L0.5 6.5Z" fill="#b0b0b0"/></svg>
<div class="a" style="left:484px;top:474px;width:364px;height:7px;background:#bababa"></div>
<div class="a" style="left:10px;top:484px;width:1158px;height:1px;background:#c8c8c8"></div>
<div class="a" style="left:9px;top:135px;width:1px;height:350px;background:#b8b8b8"></div>
<div class="a" style="left:935px;top:512px;width:13px;height:12px;border:1px solid #dcdcdc;background:#fff"></div>
<div class="a" style="left:939px;top:517px;width:4px;height:1.5px;background:#707070"></div>
<div class="a" style="left:948px;top:515px;width:159px;height:4px;background:#c0c0c0"></div>
<div class="a" style="left:992px;top:514px;width:4px;height:7px;background:#30363c;border-radius:1px"></div>
<div class="a" style="left:950.5px;top:525.5px;width:1.5px;height:1.5px;background:#555"></div>
<div class="a" style="left:1108px;top:512px;width:11px;height:12px;border:1px solid #dcdcdc;background:#fff"></div>
<div class="a" style="left:1111px;top:515.5px;width:4px;height:4px;border-radius:50%;background:#8a8a8a"></div>
<div class="t" style="left:1123.30px;top:512px;font-size:11px;color:#222;transform:scaleX(0.9305);transform-origin:0 0">78%</div>
</body></html>
